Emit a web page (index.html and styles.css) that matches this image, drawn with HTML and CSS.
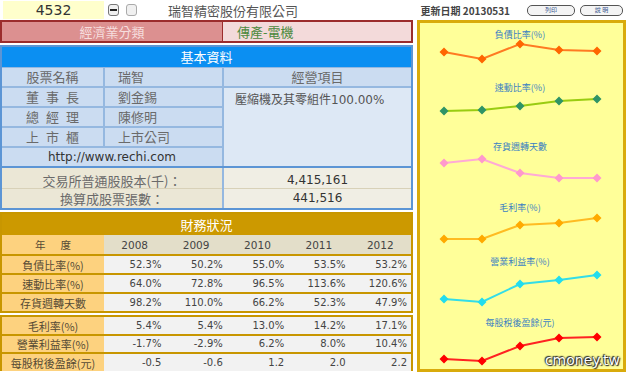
FILE: index.html
```html
<!DOCTYPE html>
<html lang="zh-Hant">
<head>
<meta charset="utf-8">
<title>瑞智精密</title>
<link rel="stylesheet" href="styles.css">
</head>
<body>
<div class="page">
  <div class="topbar">
    <div class="code">4532</div>
    <span class="mini-btn"><span class="dash"></span></span>
    <span class="mini-btn mini-btn2"></span>
    <span class="company">瑞智精密股份有限公司</span>
    <span class="update">更新日期 20130531</span>
    <span class="pill pill1">列印</span>
    <span class="pill pill2">說 明</span>
  </div>
  <div class="main">
    <div class="left">
      <div class="cls">
        <div class="cls-l">經濟業分類</div>
        <div class="cls-r">傳產-電機</div>
      </div>
      <div class="info">
        <div class="info-head">基本資料</div>
        <div class="info-grid">
          <div class="lab">股票名稱</div>
          <div class="val">瑞智</div>
          <div class="biz-head">經營項目</div>
          <div class="lab"><span class="sp">董事長</span></div>
          <div class="val">劉金錫</div>
          <div class="biz">壓縮機及其零組件<span class="num">100.00%</span></div>
          <div class="lab"><span class="sp">總經理</span></div>
          <div class="val">陳修明</div>
          <div class="lab"><span class="sp">上市櫃</span></div>
          <div class="val">上市公司</div>
          <div class="url">http://www.rechi.com</div>
        </div>
        <div class="cap">
          <div class="cap-l cap-top">交易所普通股股本(千)：</div>
          <div class="cap-r cap-top">4,415,161</div>
          <div class="cap-l">換算成股票張數：</div>
          <div class="cap-r">441,516</div>
        </div>
      </div>
      <div class="fin">
        <div class="fin-head">財務狀況</div>
        <table class="ft">
          <tr class="yr">
            <td class="fl"><span class="sp2">年度</span></td>
            <td>2008</td><td>2009</td><td>2010</td><td>2011</td><td>2012</td>
          </tr>
          <tr><td class="fl">負債比率(%)</td><td>52.3%</td><td>50.2%</td><td>55.0%</td><td>53.5%</td><td>53.2%</td></tr>
          <tr><td class="fl">速動比率(%)</td><td>64.0%</td><td>72.8%</td><td>96.5%</td><td>113.6%</td><td>120.6%</td></tr>
          <tr><td class="fl">存貨週轉天數</td><td>98.2%</td><td>110.0%</td><td>66.2%</td><td>52.3%</td><td>47.9%</td></tr>
        </table>
      </div>
      <div class="fin fin2">
        <table class="ft">
          <tr class="first"><td class="fl">毛利率(%)</td><td>5.4%</td><td>5.4%</td><td>13.0%</td><td>14.2%</td><td>17.1%</td></tr>
          <tr><td class="fl">營業利益率(%)</td><td>-1.7%</td><td>-2.9%</td><td>6.2%</td><td>8.0%</td><td>10.4%</td></tr>
          <tr><td class="fl">每股稅後盈餘(元)</td><td>-0.5</td><td>-0.6</td><td>1.2</td><td>2.0</td><td>2.2</td></tr>
        </table>
      </div>
    </div>
    <div class="panel">
      <svg class="charts" width="203" height="346" viewBox="420 23 203 346" xmlns="http://www.w3.org/2000/svg">
        <g class="ttl" font-size="9" fill="#3b7fc2" text-anchor="middle">
          <text x="520" y="38">負債比率(%)</text>
          <text x="520" y="91">速動比率(%)</text>
          <text x="520" y="150">存貨週轉天數</text>
          <text x="520" y="211">毛利率(%)</text>
          <text x="520" y="265">營業利益率(%)</text>
          <text x="520" y="326">每股稅後盈餘(元)</text>
        </g>
        <polyline points="444,52 482,59 520,44 559,50 597,51" fill="none" stroke="#ff7a22" stroke-width="2"/>
        <path fill="#ff6600" d="M444 47.5l4.5 4.5-4.5 4.5-4.5-4.5zM482 54.5l4.5 4.5-4.5 4.5-4.5-4.5zM520 39.5l4.5 4.5-4.5 4.5-4.5-4.5zM559 45.5l4.5 4.5-4.5 4.5-4.5-4.5zM597 46.5l4.5 4.5-4.5 4.5-4.5-4.5z"/>

        <polyline points="444,111 482,110 520,106 559,101 597,99" fill="none" stroke="#99cc11" stroke-width="2"/>
        <path fill="#2f9466" d="M444 106.5l4.5 4.5-4.5 4.5-4.5-4.5zM482 105.5l4.5 4.5-4.5 4.5-4.5-4.5zM520 101.5l4.5 4.5-4.5 4.5-4.5-4.5zM559 96.5l4.5 4.5-4.5 4.5-4.5-4.5zM597 94.5l4.5 4.5-4.5 4.5-4.5-4.5z"/>

        <polyline points="444,163 482,159 520,173 559,178 597,178" fill="none" stroke="#ffaad6" stroke-width="2"/>
        <path fill="#ff99cc" d="M444 158.5l4.5 4.5-4.5 4.5-4.5-4.5zM482 154.5l4.5 4.5-4.5 4.5-4.5-4.5zM520 168.5l4.5 4.5-4.5 4.5-4.5-4.5zM559 173.5l4.5 4.5-4.5 4.5-4.5-4.5zM597 173.5l4.5 4.5-4.5 4.5-4.5-4.5z"/>

        <polyline points="444,239 482,239 520,225 559,223 597,218" fill="none" stroke="#ffbb22" stroke-width="2"/>
        <path fill="#ffaa00" d="M444 234.5l4.5 4.5-4.5 4.5-4.5-4.5zM482 234.5l4.5 4.5-4.5 4.5-4.5-4.5zM520 220.5l4.5 4.5-4.5 4.5-4.5-4.5zM559 218.5l4.5 4.5-4.5 4.5-4.5-4.5zM597 213.5l4.5 4.5-4.5 4.5-4.5-4.5z"/>

        <polyline points="444,299 482,302 520,284 559,280 597,275" fill="none" stroke="#33dde8" stroke-width="2"/>
        <path fill="#22ddee" d="M444 294.5l4.5 4.5-4.5 4.5-4.5-4.5zM482 297.5l4.5 4.5-4.5 4.5-4.5-4.5zM520 279.5l4.5 4.5-4.5 4.5-4.5-4.5zM559 275.5l4.5 4.5-4.5 4.5-4.5-4.5zM597 270.5l4.5 4.5-4.5 4.5-4.5-4.5z"/>

        <polyline points="444,359 482,361 520,346 559,338 597,337" fill="none" stroke="#ff2222" stroke-width="2"/>
        <path fill="#ff0000" d="M444 354.5l4.5 4.5-4.5 4.5-4.5-4.5zM482 356.5l4.5 4.5-4.5 4.5-4.5-4.5zM520 341.5l4.5 4.5-4.5 4.5-4.5-4.5zM559 333.5l4.5 4.5-4.5 4.5-4.5-4.5zM597 332.5l4.5 4.5-4.5 4.5-4.5-4.5z"/>
      </svg>
      <div class="mark">cmoney.tw</div>
    </div>
  </div>
</div>
</body>
</html>
```
FILE: styles.css
```css
* { box-sizing: border-box; }
html, body { margin: 0; padding: 0; background: #ffffff; }
body {
  font-family: "DejaVu Sans", "Noto Sans CJK TC", sans-serif;
  color: #444;
  overflow: hidden;
}
.page { width: 626px; height: 372px; overflow: hidden; }

.topbar {
  height: 20px;
  display: flex;
  align-items: center;
  font-family: "Noto Sans CJK TC", sans-serif;
}
.code {
  margin-left: 3px;
  width: 101px;
  height: 18px;
  background: #ffffcc;
  text-align: center;
  font-family: "DejaVu Sans", sans-serif;
  font-size: 14px;
  line-height: 18px;
  color: #333;
}
.mini-btn {
  margin-left: 4px;
  width: 11px;
  height: 12px;
  border: 1px solid #777;
  border-radius: 3px;
  background: #f0f0f0;
  display: flex;
  align-items: center;
  justify-content: center;
}
.mini-btn2 { margin-left: 7px; border-color: #aaa; }
.dash { width: 7px; height: 2px; background: #222; }
.company {
  margin-left: 31px;
  font-size: 13px;
  color: #555;
}
.update {
  margin-left: auto;
  font-size: 10px;
  font-weight: bold;
  color: #444;
}
.pill {
  height: 11px;
  border: 1.5px solid #555;
  border-radius: 5px;
  background: #f4f4f4;
  font-size: 6px;
  line-height: 8px;
  text-align: center;
  color: #3a5a90;
}
.pill1 { margin-left: 17px; width: 48px; }
.pill2 { margin-left: 5px; width: 43px; margin-right: 3px; }

.main { display: flex; align-items: flex-start; }
.left { width: 413px; }

.cls {
  height: 23px;
  border: 2px solid #9b2c2c;
  display: flex;
  font-family: "Noto Sans CJK TC", sans-serif;
  font-size: 13px;
  line-height: 19px;
}
.cls-l {
  width: 221px;
  background: #dc9090;
  color: #f6dede;
  text-align: center;
  border-right: 1px solid #9b2c2c;
}
.cls-r {
  flex: 1;
  background: #f3dada;
  color: #4c8a3e;
  padding-left: 14px;
}

.info {
  margin-top: 2px;
  border: 2px solid #5c95d5;
  font-family: "Noto Sans CJK TC", sans-serif;
}
.info-head {
  height: 20px;
  background: #0b8ff2;
  color: #ffffff;
  font-size: 13px;
  line-height: 20px;
  text-align: center;
}
.info-grid {
  display: grid;
  grid-template-columns: 101px 117px 187px;
  grid-auto-rows: 18px;
  gap: 2px;
  padding-top: 1px;
  background: #95b8e0;
  font-size: 13px;
  line-height: 18px;
}
.lab { background: #cbdcf1; color: #6a6a6a; text-align: center; }
.sp { letter-spacing: 7px; margin-right: -7px; }
.val { background: #cbdcf1; color: #6a6a6a; padding-left: 13px; }
.biz-head { background: #cbdcf1; color: #6a6a6a; text-align: center; }
.biz {
  grid-column: 3;
  grid-row: 2 / span 4;
  background: #dde8f5;
  color: #555;
  font-size: 12px;
  line-height: 16px;
  padding: 3px 11px;
}
.num { font-family: "DejaVu Sans", sans-serif; }
.url {
  grid-column: 1 / span 2;
  background: #cbdcf1;
  color: #333;
  text-align: center;
  font-family: "DejaVu Sans", sans-serif;
  font-size: 12px;
}
.cap {
  display: grid;
  grid-template-columns: 220px 187px;
  column-gap: 2px;
  background: #95b8e0;
  border-top: 2px solid #5c95d5;
  font-size: 13px;
}
.cap-l {
  background: #ebe7d6;
  color: #6a6a6a;
  text-align: center;
  height: 19px;
  line-height: 19px;
}
.cap-r {
  background: #f0eee4;
  color: #333;
  text-align: center;
  font-family: "DejaVu Sans", sans-serif;
  font-size: 12px;
  height: 19px;
  line-height: 19px;
}
.cap-top { height: 21px; line-height: 19px; padding-top: 3px; border-bottom: 1px solid #d8d1b8; }

.fin {
  margin-top: 2px;
  border: 2px solid #c89600;
  border-bottom: none;
  font-family: "Noto Sans CJK TC", sans-serif;
}
.fin-head {
  height: 21px;
  background: #cc9900;
  color: #ffffff;
  font-size: 13px;
  line-height: 21px;
  text-align: center;
}
.ft {
  width: 100%;
  border-collapse: collapse;
  table-layout: fixed;
}
.ft td {
  height: 19px;
  padding: 0 4px 0 0;
  text-align: right;
  background: #f2f2f2;
  color: #444;
  font-family: "DejaVu Sans", sans-serif;
  font-size: 10px;
  border-top: 2px solid #c89600;
  line-height: 16px;
}
.fin2 .ft td { height: 18px; }
.ft td.fl {
  width: 102px;
  padding: 0;
  text-align: center;
  background: #fdd27f;
  color: #554a35;
  font-family: "Noto Sans CJK TC", sans-serif;
  font-size: 11px;
}
.ft tr.yr td {
  border-top: none;
  height: 20px;
  text-align: center;
  padding: 0;
  background: #e3dec9;
  font-size: 10.5px;
}
.ft tr.yr td.fl { background: #fdd27f; }
.ft tr.first td { border-top: none; }
.sp2 { letter-spacing: 15px; margin-right: -15px; }
.fin .ft tr:last-child td { border-bottom: 2px solid #c89600; }
.fin2 .ft tr:last-child td { border-bottom: none; }

.panel {
  position: relative;
  margin-left: 4px;
  width: 209px;
  height: 352px;
  border: 3px solid #d9ab0c;
  background: #ffff99;
}
.charts { display: block; font-family: "Noto Sans CJK TC", sans-serif; }
.mark {
  position: absolute;
  right: 3px;
  bottom: 1px;
  font-family: "DejaVu Sans", sans-serif;
  font-size: 14px;
  color: #ffffff;
  text-shadow: 0 0 2px #000, 1px 1px 1px #333, -1px -1px 1px #333;
}
```
